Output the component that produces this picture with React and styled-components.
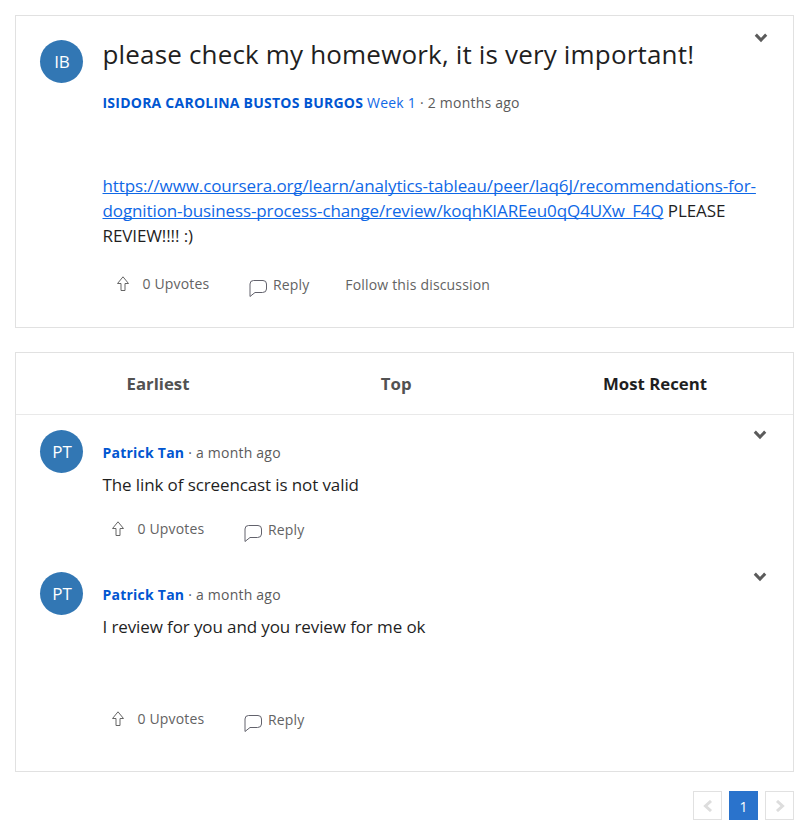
import React from 'react';
import styled, { createGlobalStyle } from 'styled-components';

const Global = createGlobalStyle`
  * { box-sizing: border-box; }
  body { margin: 0; background: #fff; color: #1f1f1f; font-family: "Open Sans", sans-serif; }
  button { font: inherit; letter-spacing: inherit; background: none; border: 0; padding: 0; color: inherit; }
`;
const Page = styled.main`padding: 15px 16px 0 15px; height: 826px; overflow: hidden;`;
const Card = styled.section`
  border: 1px solid #e1e1e1;
  height: ${p => p.$height}px;
  margin-bottom: ${p => p.$gap}px;
`;
const Post = styled.article`
  display: grid;
  grid-template-columns: 62.5px 1fr;
  padding: ${p => p.$top}px 24px 0 24px;
  height: ${p => p.$height}px;
  position: relative;
`;
const Avatar = styled.div`
  width: 43px; height: 43px; border-radius: 50%;
  background: #3277b4; color: #fff;
  font-size: 17px; line-height: 43px; text-align: center; text-indent: 1px;
`;
const Body = styled.div`padding-top: ${p => p.$top || 0}px; min-width: 0;`;
const Title = styled.h1`margin: -1px 0 0; font-weight: 400; font-size: 26px; letter-spacing: 0.17px; line-height: 30px; white-space: nowrap;`;
const Meta = styled.div`
  font-size: 14px; line-height: 20px; color: #5b5b5b; white-space: nowrap; letter-spacing: 0.23px;
  margin-top: ${p => p.$top || 0}px;
`;
const Author = styled.a`font-weight: 700; color: #0156d1;`;
const Week = styled.a`color: #0f68e6;`;
const Text = styled.p`margin: ${p => p.$top}px 0 0; font-size: 17px; letter-spacing: -0.11px; line-height: 25px; white-space: nowrap;`;
const Link = styled.a`color: #0f68e6; text-decoration: underline; text-decoration-skip-ink: none;`;
const Actions = styled.div`
  display: flex; align-items: flex-start;
  margin-top: ${p => p.$top}px; padding-left: ${p => p.$left}px;
  font-size: 14px; line-height: 20px; color: #636363; letter-spacing: 0.17px;
`;
const Action = styled.button`
  display: flex; align-items: flex-start; line-height: 20px;
  gap: ${p => p.$gap || 0}px; margin-left: ${p => p.$left || 0}px; margin-top: ${p => p.$top || 0}px;
`;
const Menu = styled.button`position: absolute; top: ${p => p.$top}px; right: ${p => p.$right}px; display: flex;`;
const Tabs = styled.nav`
  display: flex; justify-content: space-between; align-items: center;
  height: 62px; padding: 0 86px 0 110.5px; border-bottom: 1px solid #e9e9e9;
`;
const Tab = styled.button`
  && { font-size: 16.8px; font-weight: 700; color: ${p => p.$active ? '#1f1f1f' : '#525252'}; }
`;
const Pager = styled.nav`display: flex; justify-content: flex-end; gap: 7px;`;
const PageButton = styled.button`
  width: 29px; height: 29px; display: grid; place-items: center;
  && { border: 1px solid ${p => p.$active ? '#2a73cc' : '#e1e1e1'}; background: ${p => p.$active ? '#2a73cc' : '#fff'}; color: ${p => p.$active ? '#fff' : '#ddd'}; font-size: 14px; padding-top: ${p => p.$active ? 2 : 0}px; }
`;
const UpIcon = styled.svg`width: 14px; height: 16px; margin-top: 2px;`;
const ReplyIcon = styled.svg`width: 18px; height: 18px; margin-top: 5px;`;

const Chevron = () => <svg width="14" height="10" viewBox="0 0 14 10" fill="none" stroke="#5b5b5b" strokeWidth="3"><path d="M1.8 1.6 7 7l5.2-5.4" /></svg>;
const Up = () => <UpIcon viewBox="0 0 14 16" fill="none" stroke="#666"><path d="M7 .8 1.5 7.5H5v7h4v-7h3.5Z" /></UpIcon>;
const Bubble = () => <ReplyIcon viewBox="0 0 18 18" fill="none" stroke="#62626c"><path d="M4.5.5H14Q17.5.5 17.5 4v5q0 3.5-4 3.5H6l-5 4V4Q1 .5 4.5.5Z" /></ReplyIcon>;

function PostActions({ top, left, follow }) {
  return <Actions $top={top} $left={left}>
    <Action $gap={12.5}><Up />0 Upvotes</Action>
    <Action $gap={6} $left={39.5} $top={1}><Bubble />Reply</Action>
    {follow && <Action $left={36} $top={1}>Follow this discussion</Action>}
  </Actions>;
}
function Comment({ text, height, gap, top }) {
  return <Post $top={top} $height={height}>
    <Avatar>PT</Avatar>
    <Body $top={13}>
      <Meta><Author>Patrick Tan</Author> · a month ago</Meta>
      <Text $top={9}>{text}</Text>
      <PostActions top={gap} left={8.5} />
    </Body>
    <Menu $top={top} $right={26}><Chevron /></Menu>
  </Post>;
}

export default function App() {
  return <><Global /><Page>
    <Card $height={313} $gap={24}>
      <Post $top={24} $height={311}>
        <Avatar>IB</Avatar>
        <Body>
          <Title>please check my homework, it is very important!</Title>
          <Meta $top={24}><Author>ISIDORA CAROLINA BUSTOS BURGOS</Author> <Week>Week 1</Week> · 2 months ago</Meta>
          <Text $top={60}><Link>https://www.coursera.org/learn/analytics-tableau/peer/laq6J/recommendations-for-<br />dognition-business-process-change/review/koqhKIAREeu0qQ4UXw_F4Q</Link> PLEASE<br />REVIEW!!!! :)</Text>
          <PostActions top={26} left={13.5} follow />
        </Body>
        <Menu $top={17} $right={25}><Chevron /></Menu>
      </Post>
    </Card>
    <Card $height={420} $gap={19}>
      <Tabs><Tab>Earliest</Tab><Tab>Top</Tab><Tab $active>Most Recent</Tab></Tabs>
      <Comment text="The link of screencast is not valid" top={15} height={142} gap={22} />
      <Comment text="I review for you and you review for me ok" top={15} height={200} gap={70} />
    </Card>
    <Pager>
      <PageButton><svg width="10" height="12" fill="none" stroke="currentColor" strokeWidth="3"><path d="M8 1 2.5 6 8 11" /></svg></PageButton>
      <PageButton $active>1</PageButton>
      <PageButton><svg width="10" height="12" fill="none" stroke="currentColor" strokeWidth="3"><path d="m2 1 5.5 5L2 11" /></svg></PageButton>
    </Pager>
  </Page></>;
}
